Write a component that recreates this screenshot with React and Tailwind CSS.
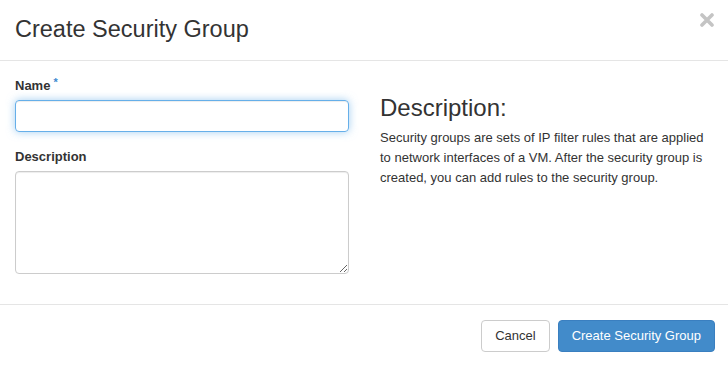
export default function App() {
  return (
    <div className="w-[728px] h-[366px] bg-white text-[#333] font-['Liberation_Sans',Arial,sans-serif] overflow-hidden">
      <div className="h-[61px] border-b border-[#e5e5e5] px-[15px] flex items-center justify-between">
        <h4 className="text-[23.5px] leading-none">Create Security Group</h4>
        <button className="self-start mt-[13px] mr-[-1px]" aria-label="Close">
          <svg width="14" height="14" viewBox="0 0 14 14">
            <path d="M2 2 L12 12 M12 2 L2 12" stroke="#c4c4c4" strokeWidth="3.6" strokeLinecap="round" />
          </svg>
        </button>
      </div>

      <div className="flex px-[15px] pt-[15px] pb-[30px]">
        <div className="w-[334px]">
          <label className="block text-[13px] font-bold leading-[19px] mb-[4px]">
            Name
            <span className="relative -top-[4px] ml-[3px] text-[11px] text-[#3f8ad0]">*</span>
          </label>
          <input
            className="block w-full h-[32px] rounded-[4px] border border-[#66afe9] px-3 text-[13px] outline-none shadow-[inset_0_1px_1px_rgba(0,0,0,0.075),0_0_8px_rgba(102,175,233,0.6)]"
          />
          <label className="block text-[13px] font-bold leading-[19px] mt-[15px] mb-[5px]">Description</label>
          <textarea className="block w-full h-[103px] rounded-[4px] border border-[#ccc] px-3 py-1.5 text-[13px] outline-none shadow-[inset_0_1px_1px_rgba(0,0,0,0.075)]" />
        </div>
        <div className="ml-[31px] w-[333px]">
          <h3 className="text-[24px] leading-[26px] mt-[19px] font-medium">Description:</h3>
          <p className="text-[13px] leading-[20px] mt-[7px]">
            Security groups are sets of IP filter rules that are applied
            <br />
            to network interfaces of a VM. After the security group is
            <br />
            created, you can add rules to the security group.
          </p>
        </div>
      </div>

      <div className="border-t border-[#e5e5e5] px-[13px] pt-[15px] flex justify-end gap-[8px]">
        <button className="h-[32px] px-[13px] rounded-[4px] border border-[#ccc] bg-white text-[13px] text-[#333]">
          Cancel
        </button>
        <button className="h-[32px] px-[13px] rounded-[4px] border border-[#3a7fc0] bg-[#428bca] text-[13px] text-white">
          Create Security Group
        </button>
      </div>
    </div>
  );
}
